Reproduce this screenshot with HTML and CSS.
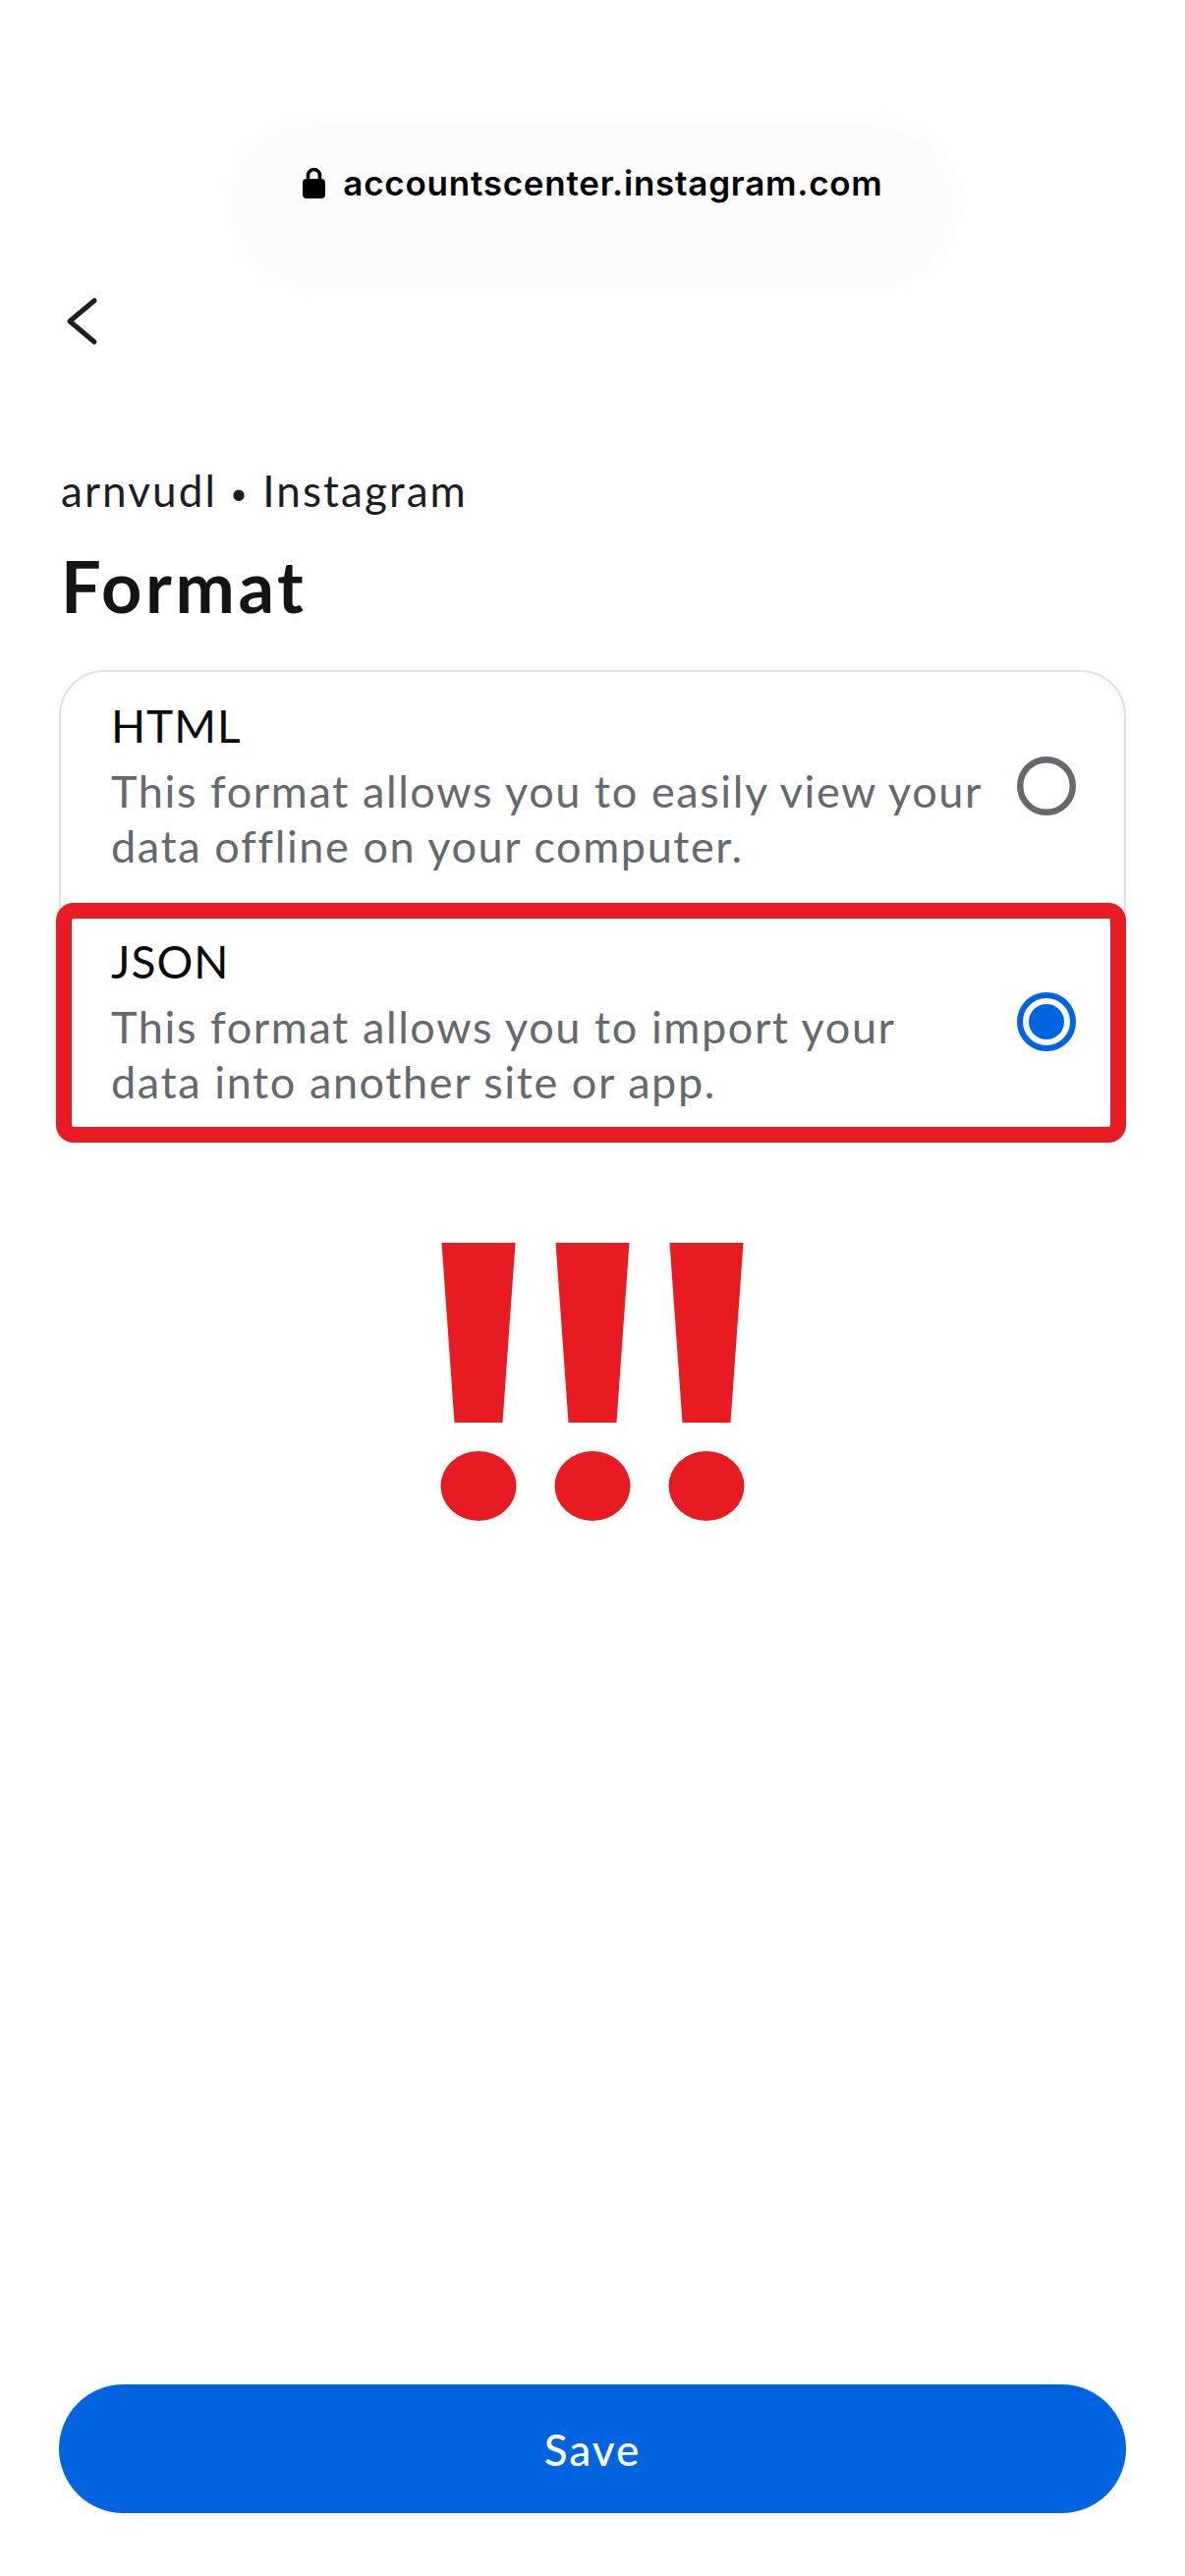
FILE: index.html
```html
<!DOCTYPE html>
<html lang="en">
<head>
<meta charset="utf-8">
<title>Format</title>
<link rel="stylesheet" href="styles.css">
</head>
<body>
<div class="page">
  <header class="topbar">
    <div class="pill">
      <svg class="lock" width="25" height="33" viewBox="0 0 25 33" aria-hidden="true">
        <path d="M6.5 15 V9.5 a6 6 0 0 1 12 0 V15" fill="none" stroke="#000" stroke-width="3.6"/>
        <rect x="1" y="13" width="23" height="20" rx="4" fill="#000"/>
      </svg>
      <span class="url">accountscenter.instagram.com</span>
    </div>
  </header>

  <nav class="nav">
    <svg class="back" width="40" height="52" viewBox="0 0 40 52" aria-hidden="true">
      <path d="M36 6 L11 27 L36 48" fill="none" stroke="#1c1e21" stroke-width="5" stroke-linecap="round" stroke-linejoin="round"/>
    </svg>
  </nav>

  <main class="content">
    <p class="account">arnvudl <span class="dot">•</span> Instagram</p>
    <h1 class="title">Format</h1>

    <div class="card">
      <div class="option">
        <div class="option-text">
          <div class="option-title">HTML</div>
          <div class="option-desc">This format allows you to easily view your data offline on your computer.</div>
        </div>
        <svg class="radio" width="60" height="60" viewBox="0 0 60 60" aria-hidden="true">
          <circle cx="30" cy="30" r="26.8" fill="none" stroke="#65686c" stroke-width="6.4"/>
        </svg>
      </div>
      <div class="option option-selected">
        <div class="option-text">
          <div class="option-title">JSON</div>
          <div class="option-desc">This format allows you to import your data into another site or app.</div>
        </div>
        <svg class="radio" width="60" height="60" viewBox="0 0 60 60" aria-hidden="true">
          <circle cx="30" cy="30" r="27" fill="none" stroke="#0064e0" stroke-width="6"/>
          <circle cx="30" cy="30" r="18" fill="#0064e0"/>
        </svg>
        <div class="highlight"></div>
      </div>
    </div>

    <div class="alert">
      <svg width="320" height="290" viewBox="0 0 320 290" aria-hidden="true">
        <g fill="#e81b23">
          <polygon points="6.5,3 81.5,3 68.5,186 19.5,186"/>
          <ellipse cx="44" cy="250.5" rx="38.5" ry="35.5"/>
          <polygon points="122.5,3 197.5,3 184.5,186 135.5,186"/>
          <ellipse cx="160" cy="250.5" rx="38.5" ry="35.5"/>
          <polygon points="238.5,3 313.5,3 300.5,186 251.5,186"/>
          <ellipse cx="276" cy="250.5" rx="38.5" ry="35.5"/>
        </g>
      </svg>
    </div>
  </main>

  <footer class="footer">
    <button class="save" type="button">Save</button>
  </footer>
</div>
</body>
</html>
```

FILE: styles.css
```css
* { box-sizing: border-box; }

html, body {
  margin: 0;
  padding: 0;
  background: #ffffff;
}

body {
  font-family: Lato, "Noto Sans", "Liberation Sans", sans-serif;
  color: #1c1e21;
}

.page {
  min-height: 2622px;
  display: flex;
  flex-direction: column;
}

.topbar {
  display: flex;
  justify-content: center;
  padding-top: 130px;
}

.pill {
  width: 720px;
  height: 155px;
  border-radius: 78px;
  background: #fbfbfb;
  box-shadow: 0 0 22px 10px #fbfbfb;
  display: flex;
  justify-content: center;
  align-items: flex-start;
  gap: 17px;
  padding-top: 36px;
}

.lock {
  display: block;
  margin-top: 3px;
}

.url {
  font-family: Inter, "Liberation Sans", sans-serif;
  font-weight: 600;
  font-size: 35px;
  line-height: 40px;
  color: #000;
  letter-spacing: 0.75px;
}

.nav {
  margin-top: 15px;
  padding-left: 60px;
  height: 52px;
}

.back { display: block; }

.content {
  padding: 0 60px;
}

.account {
  margin: 121px 0 0;
  font-size: 44px;
  line-height: 52px;
  color: #1c1e21;
  padding-left: 2px;
  letter-spacing: 2.1px;
}

.dot {
  font-size: 30px;
  vertical-align: 3px;
}

.title {
  margin: 27px 0 0;
  font-size: 72px;
  line-height: 84px;
  font-weight: 700;
  color: #141414;
  padding-left: 2px;
  letter-spacing: 3.6px;
}

.card {
  margin-top: 44px;
  border: 2px solid #dee1e5;
  border-radius: 46px;
  position: relative;
}

.option {
  display: flex;
  align-items: center;
  gap: 22px;
  padding: 27px 49px 30px 51px;
  position: relative;
}

.option-selected {
  padding-top: 32px;
  padding-bottom: 32px;
}

.option-text {
  flex: 1;
  min-width: 0;
}

.option-title {
  font-size: 46px;
  line-height: 56px;
  color: #0a0a0a;
  margin-bottom: 10px;
  letter-spacing: 1px;
}

.option-desc {
  font-size: 45px;
  line-height: 56px;
  color: #65686c;
  letter-spacing: 1.6px;
}

.radio {
  display: block;
  flex: none;
}

.highlight {
  position: absolute;
  top: 0;
  left: -5px;
  right: -2px;
  bottom: -2px;
  border: 16px solid #e81b23;
  border-radius: 18px;
  pointer-events: none;
}

.alert {
  display: flex;
  justify-content: center;
  margin-top: 99px;
}

.alert svg { display: block; }

.footer {
  margin-top: auto;
  padding: 0 60px 64px;
}

.save {
  display: block;
  width: 100%;
  height: 131px;
  border: none;
  border-radius: 66px;
  background: #0064e0;
  color: #ffffff;
  font-family: Lato, "Noto Sans", sans-serif;
  font-size: 44px;
  font-weight: 500;
  letter-spacing: 2px;
  cursor: pointer;
}
```
